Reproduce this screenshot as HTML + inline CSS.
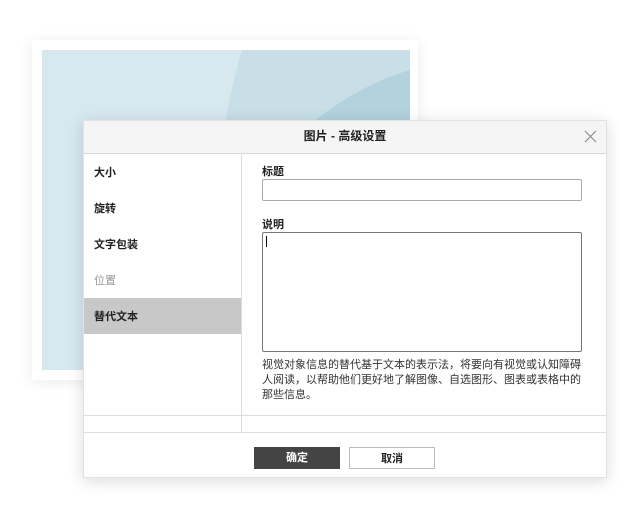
<!DOCTYPE html>
<html><head><meta charset="utf-8"><style>
body{margin:0;width:640px;height:520px;background:#fff;position:relative;overflow:hidden;font-family:"Liberation Sans","Noto Sans CJK SC",sans-serif;}
.card{position:absolute;left:32px;top:40px;width:386px;height:340px;background:#fff;box-shadow:0 2px 14px rgba(0,0,0,.08);}
.img{position:absolute;left:42px;top:50px;width:368px;height:320px;background:#d7e8ef;overflow:hidden}
.dlg{position:absolute;left:83px;top:120px;width:524px;height:358px;background:#fff;box-shadow:0 3px 14px rgba(0,0,0,.15);border:1px solid #e2e2e2;box-sizing:border-box}
.hd{height:32px;background:#f5f5f5;border-bottom:1px solid #d8d8d8;text-align:center;line-height:31px;font-size:12px;font-weight:bold;color:#222;position:relative}
.x{position:absolute;right:9px;top:9px}
.side{position:absolute;left:0;top:32px;width:157px;height:280px;border-right:1px solid #ddd}
.it{position:absolute;left:10px;font-size:11px;font-weight:bold;color:#222}
.sel{position:absolute;left:0;top:145px;width:157px;height:36px;background:#c8c8c8}
.lb{position:absolute;font-size:11px;font-weight:bold;color:#222;left:178px}
.in{position:absolute;left:178px;width:320px;border:1px solid #999;border-radius:2px;box-sizing:border-box;background:#fff}
.desc{position:absolute;left:178px;top:237px;width:322px;font-size:11px;line-height:15px;color:#333}
.btn{position:absolute;top:326px;height:22px;width:86px;font-size:11px;font-weight:bold;text-align:center;line-height:22px;box-sizing:border-box}
</style></head><body>
<div class="card"></div>
<div class="img"><svg width="368" height="320"><path d="M200 0 L368 0 L368 320 L150 320 Q175 80 200 0Z" fill="#c8dfe7"/><path d="M240 100 Q300 40 368 20 L368 320 L200 320 Q210 150 240 100Z" fill="#b2d2de"/></svg></div>
<div class="dlg">
<div class="hd">图片 - 高级设置<svg class="x" width="13" height="13"><path d="M1 1L12 12M12 1L1 12" stroke="#888" stroke-width="1.1"/></svg></div>
<div class="side"><div class="sel"></div>
<div class="it" style="top:11px">大小</div>
<div class="it" style="top:47px">旋转</div>
<div class="it" style="top:83px">文字包装</div>
<div class="it" style="top:119px;color:#999;font-weight:normal">位置</div>
<div class="it" style="top:155px">替代文本</div></div>
<div class="lb" style="top:42px">标题</div>
<div class="in" style="top:58px;height:22px;border-color:#aaa"></div>
<div class="lb" style="top:95px">说明</div>
<div class="in" style="top:111px;height:120px;border-color:#777"><div style="position:absolute;left:3px;top:3px;width:1px;height:11px;background:#000"></div></div>
<div class="desc">视觉对象信息的替代基于文本的表示法，将要向有视觉或认知障碍人阅读，以帮助他们更好地了解图像、自选图形、图表或表格中的那些信息。</div>
<div style="position:absolute;left:0;top:294px;width:522px;border-top:1px solid #ddd"></div>
<div style="position:absolute;left:0;top:311px;width:522px;border-top:1px solid #ddd"></div>
<div style="position:absolute;left:157px;top:294px;height:17px;border-left:1px solid #ddd"></div>
<div class="btn" style="left:170px;background:#444;color:#fff">确定</div>
<div class="btn" style="left:265px;border:1px solid #bbb;color:#222">取消</div>
</div>
</body></html>
